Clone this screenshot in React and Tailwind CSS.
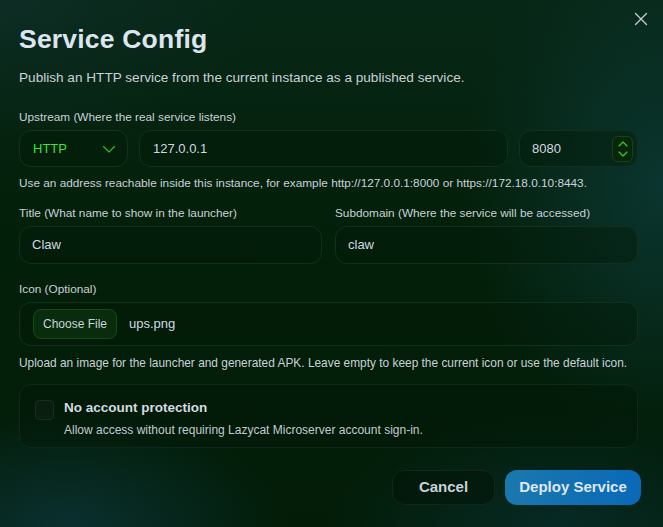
const ChevronDown = ({ className }) => (
  <svg viewBox="0 0 16 16" className={className} fill="none" stroke="currentColor" strokeWidth="1.3" strokeLinecap="round" strokeLinejoin="round">
    <path d="M2.5 5.5 L8 11 L13.5 5.5" />
  </svg>
);

export default function App() {
  return (
    <div className="relative w-[663px] h-[527px] overflow-hidden font-['Liberation_Sans',Arial,sans-serif] text-[#d3dbe3] bg-[#03200a] bg-[radial-gradient(ellipse_260px_140px_at_0%_0%,#0d2c24_0%,transparent_100%),radial-gradient(ellipse_200px_260px_at_100%_35%,#0b3530_0%,transparent_100%),radial-gradient(ellipse_220px_120px_at_10%_100%,#0a3030_0%,transparent_100%),radial-gradient(ellipse_240px_120px_at_85%_100%,#072a25_0%,transparent_100%),linear-gradient(180deg,#072716_0%,#03200a_40%,#021c07_100%)] pl-[19px] pr-[25px] pt-[23px]">
      <button className="absolute top-[12px] right-[15px] w-[14px] h-[14px] text-[#c2cad2]">
        <svg viewBox="0 0 14 14" className="w-[14px] h-[14px]" fill="none" stroke="currentColor" strokeWidth="1.4" strokeLinecap="round">
          <path d="M1.5 1.5 L12.5 12.5 M12.5 1.5 L1.5 12.5" />
        </svg>
      </button>

      <h2 className="text-[26.5px] leading-[33px] font-bold text-[#dde5ee] tracking-[0.2px]">Service Config</h2>
      <p className="mt-[12px] text-[13.6px] leading-[20px] text-[#c9d1d9]">Publish an HTTP service from the current instance as a published service.</p>

      <div className="mt-[20px] text-[11.8px] leading-[18px] text-[#c9d1d9]">Upstream (Where the real service listens)</div>
      <div className="mt-[4px] flex gap-[11px] h-[37px]">
        <div className="w-[109px] flex items-center justify-between pl-[13px] pr-[10px] rounded-[12px] border border-[#123418] bg-[#021a07]/40">
          <span className="text-[13px] text-[#3fe23f]">HTTP</span>
          <ChevronDown className="w-[16px] h-[16px] text-[#2eb52e]" />
        </div>
        <div className="flex-1 flex items-center pl-[13px] rounded-[12px] border border-[#12301a] bg-[#021a07]/40 text-[13px] text-[#d0d8e0]">127.0.0.1</div>
        <div className="w-[119px] flex items-center justify-between pl-[12px] pr-[4px] rounded-[12px] border border-[#12301a] bg-[#021a07]/40 text-[13px] text-[#d0d8e0]">
          <span>8080</span>
          <div className="w-[21px] h-[26px] rounded-[6px] border border-[#164218] bg-[#072608] flex flex-col items-center justify-center gap-[4px] text-[#3ccc3c]">
            <svg viewBox="0 0 10 6" className="w-[10px] h-[6px]" fill="none" stroke="currentColor" strokeWidth="1.1" strokeLinecap="round" strokeLinejoin="round"><path d="M1 5 L5 1 L9 5" /></svg>
            <svg viewBox="0 0 10 6" className="w-[10px] h-[6px]" fill="none" stroke="currentColor" strokeWidth="1.1" strokeLinecap="round" strokeLinejoin="round"><path d="M1 1 L5 5 L9 1" /></svg>
          </div>
        </div>
      </div>
      <p className="mt-[7px] text-[11.8px] leading-[18px] text-[#c9d1d9]">Use an address reachable inside this instance, for example http://127.0.0.1:8000 or https://172.18.0.10:8443.</p>

      <div className="mt-[12px] grid grid-cols-2 gap-x-[13px]">
        <div>
          <div className="text-[11.8px] leading-[18px] text-[#c9d1d9]">Title (What name to show in the launcher)</div>
          <div className="mt-[4px] h-[38px] flex items-center pl-[12px] rounded-[12px] border border-[#12301a] bg-[#021a07]/40 text-[13px] text-[#d0d8e0]">Claw</div>
        </div>
        <div>
          <div className="text-[11.8px] leading-[18px] text-[#c9d1d9]">Subdomain (Where the service will be accessed)</div>
          <div className="mt-[4px] h-[38px] flex items-center pl-[12px] rounded-[12px] border border-[#12301a] bg-[#021a07]/40 text-[13px] text-[#d0d8e0]">claw</div>
        </div>
      </div>

      <div className="mt-[16px] text-[11.8px] leading-[18px] text-[#c9d1d9]">Icon (Optional)</div>
      <div className="mt-[4px] h-[44px] flex items-center gap-[12px] pl-[13px] rounded-[12px] border border-[#12301a] bg-[#021a07]/40">
        <div className="h-[30px] px-[9px] flex items-center rounded-[8px] border border-[#174a1b] bg-[#092c0c] text-[12px] text-[#c8d2dc]">Choose File</div>
        <span className="text-[13px] text-[#d0d8e0]">ups.png</span>
      </div>
      <p className="mt-[8px] text-[11.9px] leading-[18px] text-[#c9d1d9]">Upload an image for the launcher and generated APK. Leave empty to keep the current icon or use the default icon.</p>

      <div className="mt-[12px] h-[64px] flex gap-[10px] pl-[15px] pt-[14px] rounded-[12px] border border-[#10281a] bg-[#021607]/40">
        <div className="mt-[1px] w-[19px] h-[20px] rounded-[4px] border border-[#1b2c22] bg-[#0a1e10]" />
        <div>
          <div className="text-[13.5px] leading-[18px] font-bold text-[#d3dbe3]">No account protection</div>
          <div className="mt-[5px] text-[12px] leading-[16px] text-[#c2cad2]">Allow access without requiring Lazycat Microserver account sign-in.</div>
        </div>
      </div>

      <div className="mt-[21.5px] flex justify-end gap-[10px] -mr-[3px]">
        <button className="w-[103px] h-[35px] rounded-[12px] border border-[#14261a] bg-[#021508]/60 text-[15px] font-bold text-[#c8d2dc]">Cancel</button>
        <button className="w-[136px] h-[35px] rounded-[12px] bg-[linear-gradient(90deg,#1b78ad,#0969b8)] text-[15px] font-bold text-[#dfe7ef]">Deploy Service</button>
      </div>
    </div>
  );
}
